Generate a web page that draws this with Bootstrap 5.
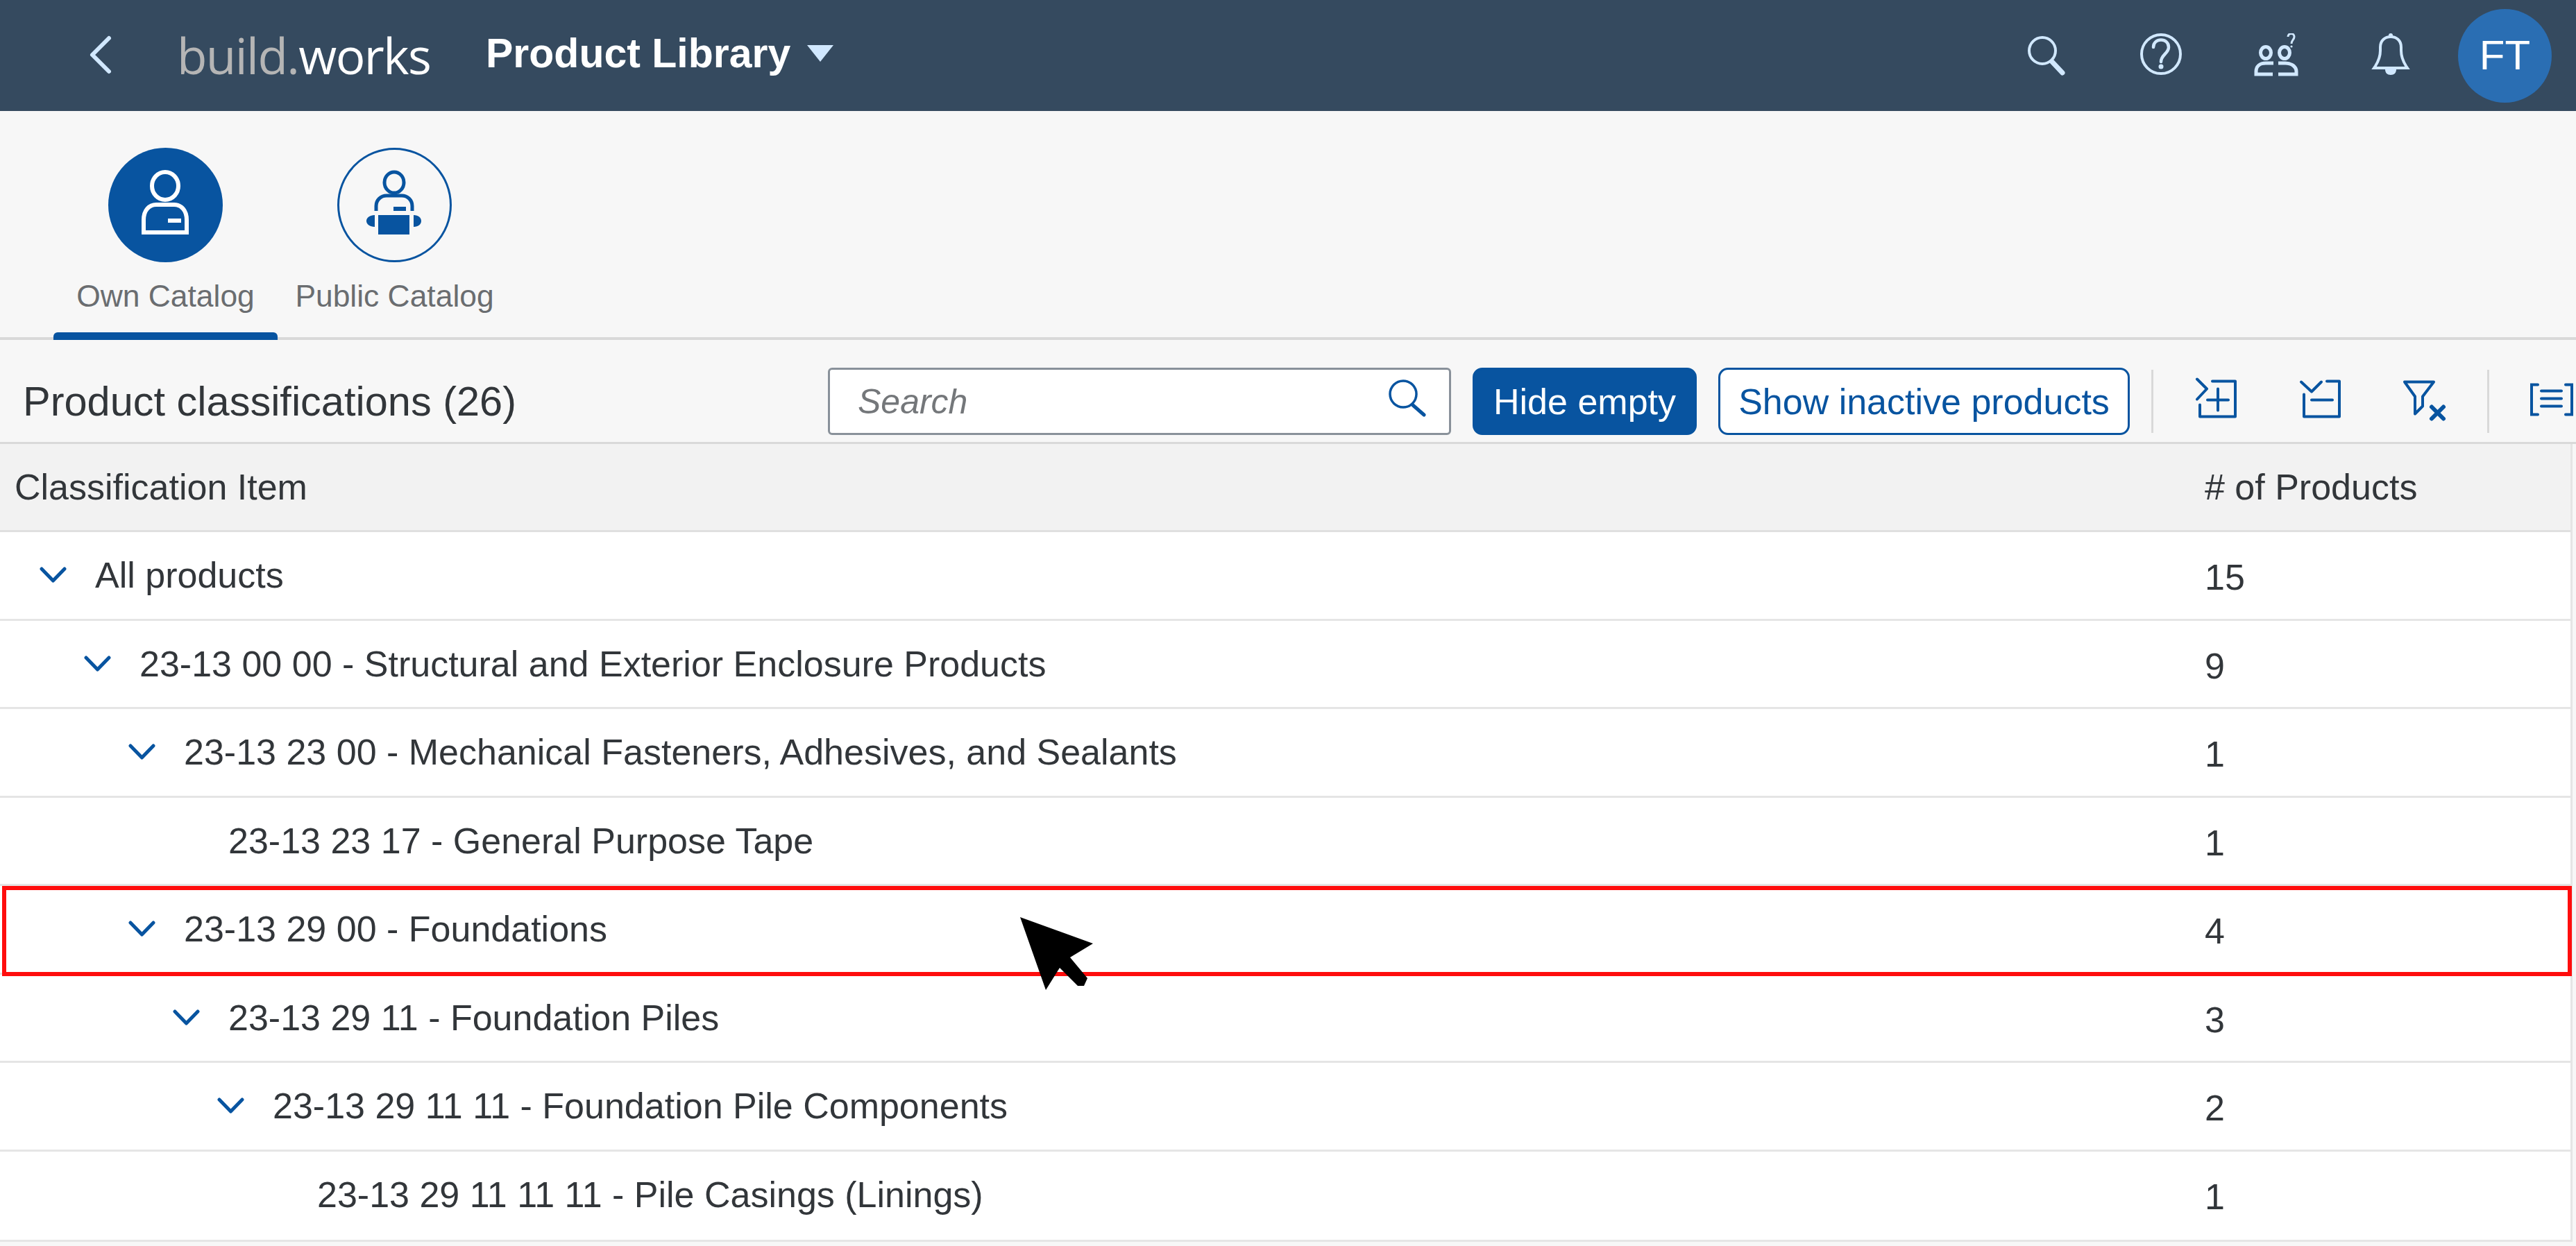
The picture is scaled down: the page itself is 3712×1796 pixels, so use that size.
<!DOCTYPE html>
<html lang="en">
<head>
    <meta charset="UTF-8">
    <meta name="viewport" content="width=device-width, initial-scale=1.0">
    <title>Product Library</title>
    <link href="https://cdn.jsdelivr.net/npm/bootstrap@5.3.0/dist/css/bootstrap.min.css" rel="stylesheet">
    <style>
        body { background: #f7f7f7; color: #32363a; font-family: "Liberation Sans", Arial, sans-serif; font-size: 52px; line-height: 1.2; }
        svg { display: block; flex: none; }
        .shell-bar { height: 160px; background: #354a5f; color: #fff; }
        .shell-back { margin-left: 125px; }
        .shell-logo { margin-left: 90px; font-family: "Open Sans", sans-serif; font-weight: 400; font-size: 71px; letter-spacing: -1.6px; color: #fff; width: 445px; }
        .shell-logo span { color: #b5b5b5; }
        .shell-title { font-size: 59px; font-weight: 700; width: 463px; margin-top: -6px; }
        .shell-caret { width: 0; height: 0; border-left: 19px solid transparent; border-right: 19px solid transparent; border-top: 24px solid #d1e8ff; margin-top: -6px; }
        .shell-icon-search { margin-left: auto; }
        .shell-gap-help { margin-left: 102px; }
        .shell-gap-users { margin-left: 101px; }
        .shell-gap-bell { margin-left: 103px; }
        .shell-avatar { width: 135px; height: 135px; background: #2a6eb3; margin-left: 68px; margin-right: 35px; font-size: 60px; }
        .catalog-bar { height: 330px; border-bottom: 4px solid #d9d9d9; }
        .catalog-tab { width: 323px; margin-left: 77px; padding-top: 53px; color: #6a6d70; font-size: 44.4px; }
        .catalog-tab + .catalog-tab { margin-left: 7px; }
        .catalog-tab.is-active { height: 326px; }
        .catalog-tab.is-active::after { content: ""; position: absolute; left: 0; right: 0; bottom: -4px; height: 11px; background: #0854a0; border-radius: 6px 6px 0 0; }
        .catalog-tab span { margin-top: 22px; }
        .catalog-circle { width: 165px; height: 165px; }
        .tool-bar { height: 150px; padding-left: 33px; padding-top: 30px; border-bottom: 3px solid #d9d9d9; }
        .tool-title { font-size: 59.5px; width: 1160px; }
        .tool-search { width: 898px; height: 97px; background: #fff; border: 3px solid #89919a; border-radius: 6px; padding: 0 33px 0 40px; }
        .tool-search em { color: #74777a; font-size: 50px; }
        .tool-search svg { margin-bottom: 9px; }
        .tool-btn { height: 97px; padding: 0; font-size: 52px; line-height: 1; border-radius: 14px; border: 3px solid #0854a0; }
        .tool-btn-hide { width: 323px; margin-left: 31px; background: #0854a0; color: #fff; }
        .tool-btn-show { width: 593px; margin-left: 31px; background: #fff; color: #0854a0; }
        .tool-sep { width: 3px; height: 91px; background: #d9d9d9; }
        .gap-a { margin-left: 31px; }
        .gap-b { margin-left: 57px; }
        .gap-c { margin-left: 80px; }
        .gap-d { margin-left: 78px; }
        .gap-e { margin-left: 56px; }
        .gap-f { margin-left: 55px; }
        .tree-table { width: 3707px; background: #fff; border-right: 3px solid #e5e5e5; }
        .tree-head { height: 127px; background: #f2f2f2; padding-left: 21px; padding-top: 1px; border-bottom: 3px solid #e0e0e0; }
        .tree-row { height: 127.5px; border-bottom: 3px solid #e5e5e5; }
        .tree-row-last { height: 130.5px; padding-bottom: 3px; }
        .tree-name { width: 3177px; }
        .tree-count { position: relative; top: 3px; }
        .tree-caret { width: 39px; margin-left: 57px; margin-right: 41px; }
        .lvl-2 { padding-left: 64px; }
        .lvl-3 { padding-left: 128px; }
        .lvl-4 { padding-left: 192px; }
        .lvl-5 { padding-left: 256px; }
        .lvl-6 { padding-left: 320px; }
        .tree-leaf.lvl-4 { padding-left: 329px; }
        .tree-leaf.lvl-6 { padding-left: 457px; }
        .red-frame { position: absolute; left: 3px; top: 0; width: 3703px; height: 130px; border: 6px solid #ff0d0d; pointer-events: none; }
        .mouse-pointer { position: absolute; left: 1460px; top: 1315px; }
    </style>
</head>
<body class="position-relative">
    <header class="shell-bar d-flex align-items-center">
        <svg class="shell-back" width="40" height="60" viewBox="125 50 40 60" fill="none" stroke="#d1e8ff" stroke-width="6" stroke-linecap="round" stroke-linejoin="round"><path d="M157 55 133 79 157 103"/></svg>
        <div class="shell-logo"><span>build.</span>works</div>
        <div class="shell-title">Product Library</div>
        <div class="shell-caret"></div>

        <svg class="shell-icon-search" width="60" height="60" viewBox="2920 50 60 60" fill="none" stroke="#d1e8ff"><circle cx="2943" cy="73" r="19" stroke-width="4"/><path d="M2957 89 2972 105" stroke-width="7" stroke-linecap="round"/></svg>
        <svg class="shell-gap-help" width="64" height="64" viewBox="3082 48 64 64" fill="none" stroke="#d1e8ff"><circle cx="3114" cy="78" r="28" stroke-width="4"/><path d="M3103 68c0-14 22-14 22 0 0 9-11 11-11 21" stroke-width="4.5" stroke-linecap="round"/><circle cx="3114" cy="96" r="3.500" fill="#d1e8ff" stroke="none"/></svg>
        <svg class="shell-gap-users" width="66" height="64" viewBox="3247 48 66 64" fill="none" stroke="#d1e8ff" stroke-width="5"><ellipse cx="3265" cy="76" rx="7.500" ry="8.500"/><ellipse cx="3292" cy="76" rx="7.500" ry="8.500"/><path d="M3276 91h-11c-9 0-14 5-14 12v4h24"/><path d="M3283 91h10c9 0 16 5 16 12v4h-26"/><path d="M3297 53c0-6 9-6 9 0 0 4-4 5-4 10" stroke-width="3"/><circle cx="3302" cy="67" r="1.6" fill="#d1e8ff" stroke="none"/></svg>
        <svg class="shell-gap-bell" width="58" height="64" viewBox="3416 48 58 64" fill="none" stroke="#d1e8ff" stroke-width="4"><path d="M3421 98h48l-2-3c-5-8-7-15-7-22v-5c0-10-7-15-15-15s-15 5-15 15v5c0 7-2 14-7 22z"/><circle cx="3445" cy="51" r="3" fill="#d1e8ff" stroke="none"/><path d="M3437 100h16c0 5-3 8-8 8s-8-3-8-8z" fill="#d1e8ff" stroke="none"/></svg>
        <div class="shell-avatar rounded-circle d-flex align-items-center justify-content-center">FT</div>
    </header>

    <section class="catalog-bar d-flex">
        <div class="catalog-tab is-active position-relative d-flex flex-column align-items-center">
            <svg class="catalog-circle" viewBox="0 0 165 165"><circle cx="82.5" cy="82.5" r="82.5" fill="#0854a0"/><g fill="none" stroke="#fff" stroke-width="6"><ellipse cx="82" cy="55" rx="19" ry="20"/><path d="M51 122V104c0-14 8-22 18-22h26c10 0 18 8 18 22v18z"/></g><rect x="86" y="102" width="19" height="6" fill="#fff"/></svg>
            <span>Own Catalog</span>
        </div>
        <div class="catalog-tab d-flex flex-column align-items-center">
            <svg class="catalog-circle" viewBox="0 0 165 165"><circle cx="82.5" cy="82.5" r="81" fill="none" stroke="#0854a0" stroke-width="3"/><g fill="none" stroke="#0854a0" stroke-width="5"><ellipse cx="82" cy="50" rx="14" ry="15"/><path d="M56 91V84c0-9 7-15 15-15h22c8 0 15 6 15 15v7"/></g><g fill="#0854a0"><rect x="81" y="85" width="18" height="6"/><rect x="59" y="97" width="45" height="28"/><path d="M54 97v17c-7 0-12-4-12-8.500s5-8.500 12-8.500zM110 97v17c7 0 11-4 11-8.500s-4-8.500-11-8.500z"/></g></svg>
            <span>Public Catalog</span>
        </div>
    </section>

    <section class="tool-bar d-flex align-items-center">
        <div class="tool-title">Product classifications (26)</div>
        <div class="tool-search d-flex align-items-center justify-content-between">
            <em>Search</em>
            <svg width="54" height="54" viewBox="2001 547 54 54" fill="none" stroke="#0854a0"><circle cx="2022" cy="568" r="19" stroke-width="3.500"/><path d="M2036 584 2052 598" stroke-width="5" stroke-linecap="round"/></svg>
        </div>
        <button type="button" class="btn tool-btn tool-btn-hide">Hide empty</button>
        <button type="button" class="btn tool-btn tool-btn-show">Show inactive products</button>
        <div class="tool-sep gap-a"></div>
        <svg class="gap-b" width="70" height="70" viewBox="3160 546.5 70 70" fill="none" stroke="#0854a0" stroke-width="4" stroke-linecap="round" stroke-linejoin="round"><path d="M3166 549 3180 563 3166 578M3188 552H3221V603H3170V586M3181 579H3211M3196 563V594"/></svg>
        <svg class="gap-c" width="70" height="70" viewBox="3310 546.5 70 70" fill="none" stroke="#0854a0" stroke-width="4" stroke-linecap="round" stroke-linejoin="round"><path d="M3316 553 3331 567 3345 553M3353 552H3371V603H3320V571M3331 579H3361"/></svg>
        <svg class="gap-d" width="70" height="70" viewBox="3458 546.5 70 70" fill="none" stroke="#0854a0" stroke-width="4" stroke-linecap="round" stroke-linejoin="round"><path d="M3465 553H3507L3491 574V588L3480 599V574z"/><path d="M3504 589 3521 606M3521 589 3504 606" stroke-width="6"/></svg>
        <div class="tool-sep gap-e"></div>
        <svg class="gap-f" width="70" height="70" viewBox="3642 546.5 70 70" fill="none" stroke="#0854a0" stroke-width="4" stroke-linecap="round"><path d="M3657 557H3648V600H3657M3697 557H3706V600H3697M3662 566H3691M3662 577H3691M3662 588H3691"/></svg>
    </section>

    <main class="tree-table">
        <div class="tree-head d-flex align-items-center">
            <div class="tree-name" style="width:3156px">Classification Item</div>
            <div># of Products</div>
        </div>
        <div class="tree-row d-flex align-items-center">
            <div class="tree-name d-flex align-items-center"><svg class="tree-caret" height="24" viewBox="0 0 39 24" fill="none" stroke="#0854a0" stroke-width="5" stroke-linecap="round" stroke-linejoin="round"><path d="M3 3 19.500 20 36 3"/></svg>All products</div>
            <div class="tree-count">15</div>
        </div>
        <div class="tree-row d-flex align-items-center">
            <div class="tree-name lvl-2 d-flex align-items-center"><svg class="tree-caret" height="24" viewBox="0 0 39 24" fill="none" stroke="#0854a0" stroke-width="5" stroke-linecap="round" stroke-linejoin="round"><path d="M3 3 19.500 20 36 3"/></svg>23-13 00 00 - Structural and Exterior Enclosure Products</div>
            <div class="tree-count">9</div>
        </div>
        <div class="tree-row d-flex align-items-center">
            <div class="tree-name lvl-3 d-flex align-items-center"><svg class="tree-caret" height="24" viewBox="0 0 39 24" fill="none" stroke="#0854a0" stroke-width="5" stroke-linecap="round" stroke-linejoin="round"><path d="M3 3 19.500 20 36 3"/></svg>23-13 23 00 - Mechanical Fasteners, Adhesives, and Sealants</div>
            <div class="tree-count">1</div>
        </div>
        <div class="tree-row d-flex align-items-center">
            <div class="tree-name tree-leaf lvl-4">23-13 23 17 - General Purpose Tape</div>
            <div class="tree-count">1</div>
        </div>
        <div class="tree-row d-flex align-items-center position-relative">
            <div class="tree-name lvl-3 d-flex align-items-center"><svg class="tree-caret" height="24" viewBox="0 0 39 24" fill="none" stroke="#0854a0" stroke-width="5" stroke-linecap="round" stroke-linejoin="round"><path d="M3 3 19.500 20 36 3"/></svg>23-13 29 00 - Foundations</div>
            <div class="tree-count">4</div>
            <div class="red-frame"></div>
        </div>
        <div class="tree-row d-flex align-items-center">
            <div class="tree-name lvl-4 d-flex align-items-center"><svg class="tree-caret" height="24" viewBox="0 0 39 24" fill="none" stroke="#0854a0" stroke-width="5" stroke-linecap="round" stroke-linejoin="round"><path d="M3 3 19.500 20 36 3"/></svg>23-13 29 11 - Foundation Piles</div>
            <div class="tree-count">3</div>
        </div>
        <div class="tree-row d-flex align-items-center">
            <div class="tree-name lvl-5 d-flex align-items-center"><svg class="tree-caret" height="24" viewBox="0 0 39 24" fill="none" stroke="#0854a0" stroke-width="5" stroke-linecap="round" stroke-linejoin="round"><path d="M3 3 19.500 20 36 3"/></svg>23-13 29 11 11 - Foundation Pile Components</div>
            <div class="tree-count">2</div>
        </div>
        <div class="tree-row tree-row-last d-flex align-items-center">
            <div class="tree-name tree-leaf lvl-6">23-13 29 11 11 11 - Pile Casings (Linings)</div>
            <div class="tree-count">1</div>
        </div>
    </main>

    <svg class="mouse-pointer" width="125" height="120" viewBox="1460 1315 125 120"><path d="M1470 1322 1575 1360 1542 1380 1567 1410 1562 1421H1553L1527 1395 1507 1427z" fill="#000"/></svg>

    <script src="https://cdn.jsdelivr.net/npm/bootstrap@5.3.0/dist/js/bootstrap.bundle.min.js"></script>
</body>
</html>
